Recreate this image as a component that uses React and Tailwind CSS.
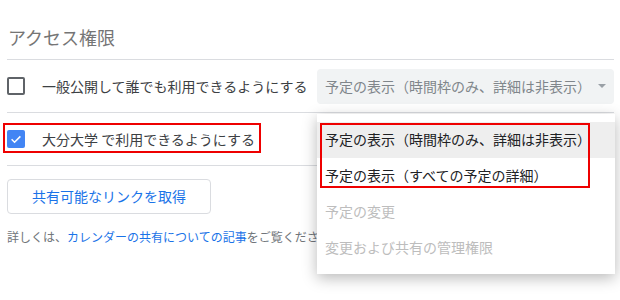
import React from "react";

const font = { fontFamily: '"Noto Sans CJK JP", "Noto Sans", sans-serif' };

function Check() {
  return (
    <span className="flex h-[18px] w-[18px] shrink-0 items-center justify-center rounded-[2px] bg-[#4285f4]">
      <svg width="14" height="14" viewBox="0 0 24 24">
        <path d="M4.5 12.5l5 5 10-10" fill="none" stroke="#fff" strokeWidth="2.6" />
      </svg>
    </span>
  );
}

export default function App() {
  return (
    <div className="h-[300px] w-[620px] overflow-hidden bg-white [font-family:'Noto_Sans_CJK_JP','Noto_Sans',sans-serif]" style={font}>
      <div className="pl-[7px] pr-[6px] pt-[25px]">
        <div className="border-b border-[#dadce0] pb-[10px] pl-[1px] text-[18px] leading-[24px] text-[#757575]">
          アクセス権限
        </div>

        <div className="flex h-[53px] items-center border-b border-[#dadce0]">
          <span className="h-[18px] w-[18px] shrink-0 rounded-[2px] border-2 border-[#5f6368]" />
          <span className="ml-[17px] text-[14px] leading-[20px] text-[#3c4043]">
            一般公開して誰でも利用できるようにする
          </span>
          <div className="relative ml-auto w-[297px]">
            <div className="flex h-[35px] items-center rounded-[4px] bg-[#f1f3f4] pl-[8px] pr-[8px] text-[14px] text-[#80868b]">
              <span className="flex-1">予定の表示（時間枠のみ、詳細は非表示）</span>
              <svg width="8" height="4" viewBox="0 0 8 4">
                <path d="M0 0h8L4 4z" fill="#9aa0a6" />
              </svg>
            </div>
            <div className="absolute left-0 right-[-1px] top-[45px] z-10 bg-white py-[8px] shadow-[0_4px_14px_rgba(0,0,0,0.28)]">
              <div className="flex h-[36px] items-center bg-[#eeeeee] pl-[8px] text-[14px] text-[#202124]">
                予定の表示（時間枠のみ、詳細は非表示）
              </div>
              <div className="flex h-[36px] items-center pl-[8px] text-[14px] text-[#202124]">
                予定の表示（すべての予定の詳細）
              </div>
              <div className="flex h-[36px] items-center pl-[8px] text-[14px] text-[#bdbdbd]">
                予定の変更
              </div>
              <div className="flex h-[36px] items-center pl-[8px] text-[14px] text-[#bdbdbd]">
                変更および共有の管理権限
              </div>
              <div className="pointer-events-none absolute left-[3px] top-[9px] h-[65px] w-[270px] border-2 border-[#ee0000]" />
            </div>
          </div>
        </div>

        <div className="flex h-[53px] items-center border-b border-[#dadce0]">
          <div className="relative flex items-center">
            <Check />
            <span className="ml-[17px] text-[14px] leading-[20px] text-[#3c4043]">
              大分大学 で利用できるようにする
            </span>
            <div className="pointer-events-none absolute left-[-4px] top-[-6px] h-[30px] w-[258px] border-2 border-[#ee0000]" />
          </div>
        </div>

        <button className="mt-[13px] flex h-[35px] w-[204px] items-center justify-center rounded-[4px] border border-[#dadce0] bg-white text-[14px] text-[#1a73e8]">
          共有可能なリンクを取得
        </button>

        <div className="mt-[14px] whitespace-nowrap text-[12px] leading-[18px] text-[#70757a]">
          詳しくは、<span className="text-[#1a73e8]">カレンダーの共有についての記事</span>をご覧ください。
        </div>
      </div>
    </div>
  );
}
